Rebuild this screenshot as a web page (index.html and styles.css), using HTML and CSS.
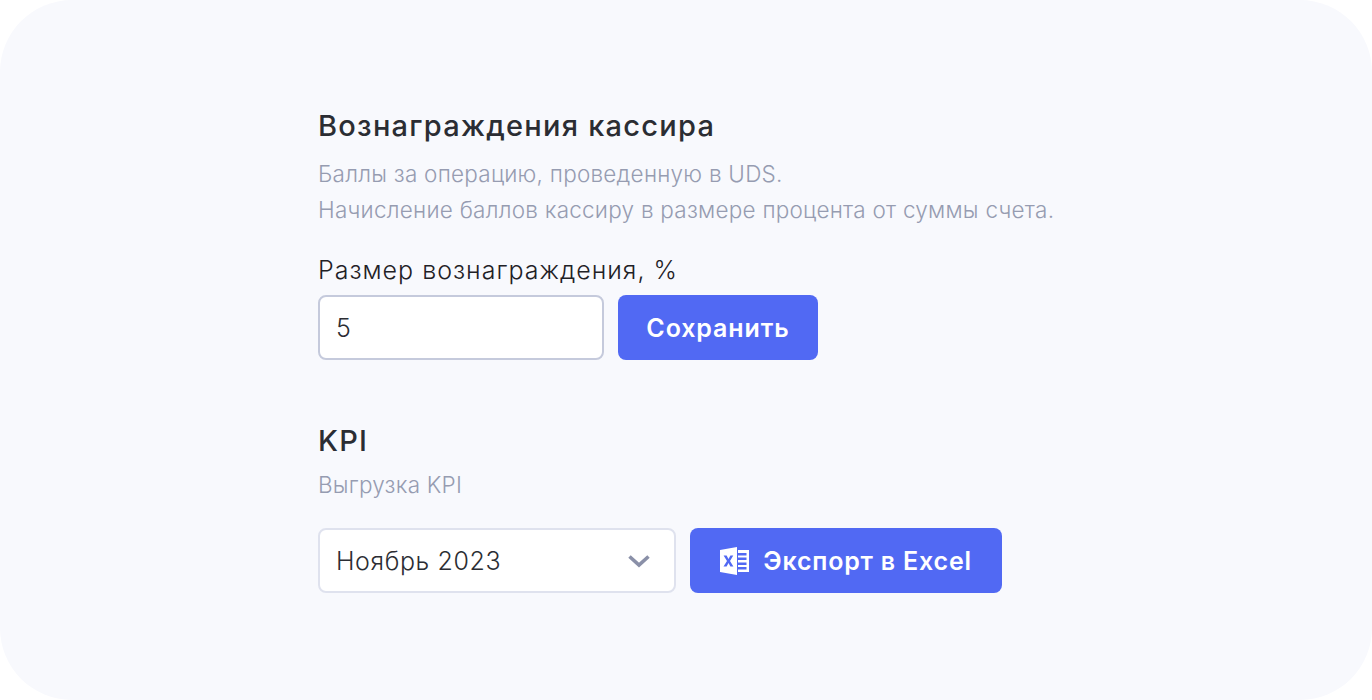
FILE: index.html
```html
<!DOCTYPE html>
<html lang="ru">
<head>
    <meta charset="UTF-8">
    <title>Вознаграждения кассира</title>
    <link rel="stylesheet" href="styles.css">
</head>
<body>
    <div class="card">
        <section class="reward">
            <h2 class="title">Вознаграждения кассира</h2>
            <p class="hint hint-first">Баллы за операцию, проведенную в UDS.</p>
            <p class="hint">Начисление баллов кассиру в размере процента от суммы счета.</p>
            <label class="field-label" for="reward">Размер вознаграждения, %</label>
            <div class="row">
                <input class="input" id="reward" type="text" value="5">
                <button class="btn btn-save" type="button">Сохранить</button>
            </div>
        </section>
        <section class="kpi">
            <h2 class="title">KPI</h2>
            <p class="hint hint-kpi">Выгрузка KPI</p>
            <div class="row row-kpi">
                <div class="select">
                    <span>Ноябрь 2023</span>
                    <svg width="24" height="14" viewBox="0 0 24 14" fill="none">
                        <path d="M2.5 2.5L12 11L21.5 2.5" stroke="#8a90a8" stroke-width="3.6"/>
                    </svg>
                </div>
                <button class="btn btn-export" type="button">
                    <svg width="29" height="28" viewBox="0 0 29 28">
                        <path d="M0 3L17 0V28L0 25Z" fill="#fff"/>
                        <path d="M3.6 8.5H6.6L8.5 12L10.4 8.5H13.3L10 14L13.4 19.5H10.4L8.5 16L6.6 19.5H3.5L7 14Z" fill="#5169f3"/>
                        <path d="M18 3H29V25H18V22.5H26.5V20H18V18H26.5V15.5H18V13H26.5V10.5H18V8.5H26.5V6H18Z" fill="#fff"/>
                    </svg>
                    Экспорт в Excel
                </button>
            </div>
        </section>
    </div>
</body>
</html>
```
FILE: styles.css
```css
:root {
    --primary-color: #5169f3;
    --background-color: #f8f9fd;
    --title-color: #2b2d33;
    --hint-color: #969cb1;
    --text-color: #2b2d33;
}
* {
    box-sizing: border-box;
    margin: 0;
    padding: 0;
}
body {
    font-family: 'Inter', 'Noto Sans', sans-serif;
    background-color: #ffffff;
    color: var(--text-color);
}
.card {
    width: 1372px;
    height: 700px;
    background: var(--background-color);
    border-radius: 72px;
    padding: 108px 0 0 318px;
}
.title {
    font-size: 29px;
    line-height: 36px;
    font-weight: 550;
    color: var(--title-color);
    letter-spacing: 1.25px;
}
.hint {
    font-size: 22.5px;
    line-height: 36px;
    font-weight: 300;
    color: var(--hint-color);
    letter-spacing: 0.24px;
}
.hint-first {
    margin-top: 12px;
}
.hint-kpi {
    margin-top: 8px;
}
.field-label {
    display: block;
    font-size: 25px;
    line-height: 32px;
    font-weight: 350;
    color: #1f2126;
    letter-spacing: 1px;
    margin-top: 26px;
    margin-bottom: 9px;
}
.row {
    display: flex;
    gap: 14px;
}
.input {
    width: 286px;
    height: 65px;
    border: 2px solid #c5cadc;
    border-radius: 8px;
    background: #ffffff;
    padding: 0 16px;
    font-family: inherit;
    font-size: 25px;
    font-weight: 300;
    color: var(--text-color);
}
.btn {
    height: 65px;
    border: none;
    border-radius: 8px;
    background: var(--primary-color);
    color: #ffffff;
    font-family: inherit;
    font-size: 25px;
    font-weight: 600;
    letter-spacing: 0.8px;
    display: flex;
    align-items: center;
    justify-content: center;
}
.btn-save {
    width: 200px;
    letter-spacing: 0.9px;
}
.kpi {
    margin-top: 63px;
}
.row-kpi {
    margin-top: 25px;
}
.select {
    width: 358px;
    height: 65px;
    border: 2px solid #dfe2ee;
    border-radius: 8px;
    background: #ffffff;
    padding: 0 23px 0 16px;
    font-size: 25px;
    font-weight: 300;
    letter-spacing: 0.6px;
    display: flex;
    align-items: center;
    justify-content: space-between;
}
.btn-export {
    width: 312px;
    gap: 14px;
}
```
